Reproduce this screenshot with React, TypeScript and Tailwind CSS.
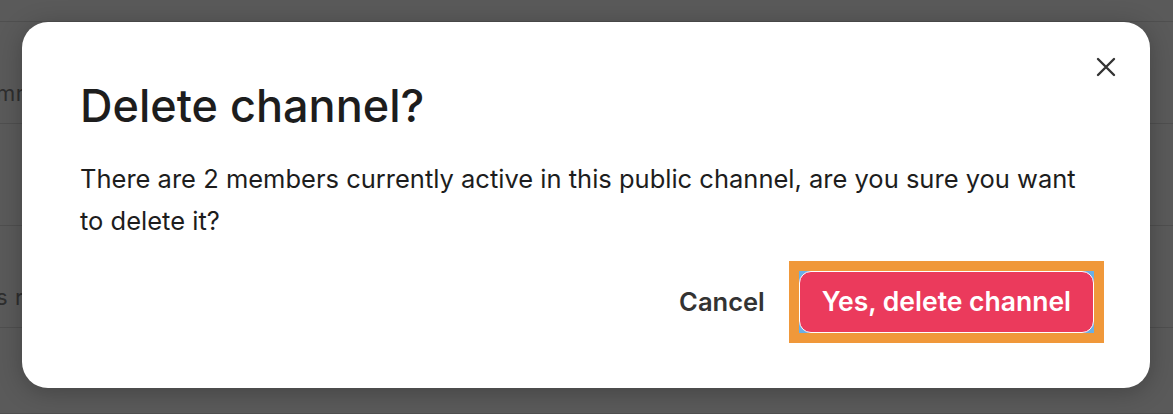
import React from "react"

const rows = [
  { text: "", h: "h-[22px]" },
  { text: "mm", h: "h-[102px]" },
  { text: "", h: "h-[102px]" },
  { text: "s r", h: "h-[102px]" },
  { text: "", h: "h-[86px]" },
]

export default function App() {
  return (
    <div className="relative h-[414px] w-full overflow-hidden bg-[#5a5a5a] font-['Inter',sans-serif]">
      {/* Page behind the overlay */}
      <div className="flex flex-col">
        {rows.map((row, i) => (
          <div
            key={i}
            className={`${row.h} flex items-end pb-[16px] border-b border-[#4f4f4f] text-[22px] leading-[28px] text-[#2e2e2e]`}
          >
            <span className="-ml-[4px] tracking-wide">{row.text}</span>
          </div>
        ))}
      </div>

      {/* Dialog */}
      <div className="absolute left-[22px] top-[22px] flex h-[366px] w-[1128px] flex-col rounded-[26px] bg-white pl-[58px] pr-[46px] pt-[57px] shadow-[0_4px_24px_rgba(0,0,0,0.25)]">
        <button className="absolute right-[34px] top-[35px] flex h-[20px] w-[20px] items-center justify-center text-[#333]">
          <svg viewBox="0 0 20 20" className="h-[20px] w-[20px]" fill="none" stroke="currentColor" strokeWidth={2.4} strokeLinecap="round">
            <path d="M2 2 L18 18 M18 2 L2 18" />
          </svg>
        </button>

        <h1 className="text-[45px] leading-[54px] font-medium text-[#1d1d1d]">
          Delete channel?
        </h1>
        <p className="mt-[25px] pr-[10px] text-[25.5px] leading-[42px] text-[#1d1d1d]">
          There are 2 members currently active in this public channel, are you sure you want to delete it?
        </p>

        <div className="mt-auto mb-[45px] flex items-center justify-end gap-[24px]">
          <button className="text-[25.5px] font-semibold text-[#333]">Cancel</button>
          <div className="bg-[#f0983a] p-[10px]">
            <div className="bg-[#6aafe6]">
              <button className="flex h-[62px] items-center rounded-[12px] border border-white bg-[#eb3a5c] px-[22px] text-[26.5px] font-semibold text-white">
                Yes, delete channel
              </button>
            </div>
          </div>
        </div>
      </div>
    </div>
  )
}
